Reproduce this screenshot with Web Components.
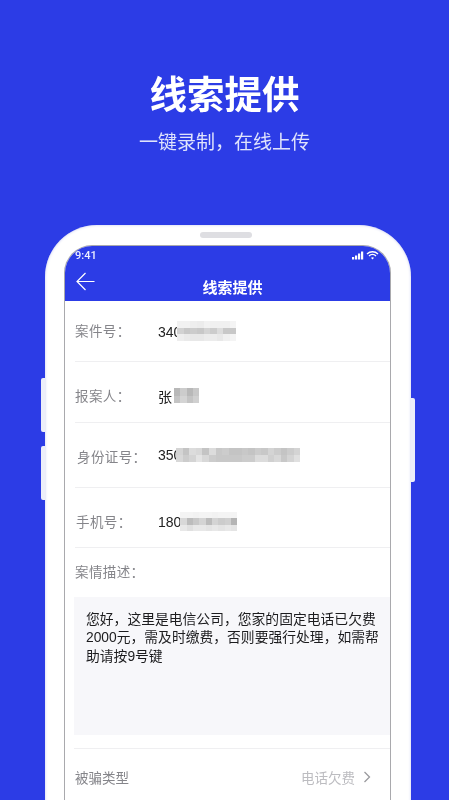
<!DOCTYPE html>
<html lang="zh">
<head>
<meta charset="utf-8">
<title>线索提供</title>
<style>
html, body { margin: 0; padding: 0; background: #2c3ce6; }
body { font-family: "Liberation Sans", "Noto Sans CJK SC", sans-serif; }
</style>
</head>
<body>
<promo-page>
  <promo-hero slot="hero" heading="线索提供" sub="一键录制，在线上传"></promo-hero>
  <phone-frame slot="phone">
    <status-bar time="9:41"></status-bar>
    <nav-bar heading="线索提供"></nav-bar>
    <form-row label="案件号：" value="340" style="--h:60px;--lb:2px;--vt:1px">
      <blur-block cols="9" cells="f2f2eeecf2f0f0f0f4 d2c8ccc8d4ccdcc8c8 eeeae8e8ecece8f0f4" w="59" h="20" style="--left:-4px"></blur-block>
    </form-row>
    <form-row label="报案人：" value="张" style="--pt:7px;--h:60px;--lb:2px">
      <blur-block cols="4" cells="b8ccb8c8 c4d4c4d0" w="25" h="15" style="--left:2px"></blur-block>
    </form-row>
    <form-row label="身份证号：" value="350" style="--h:64px;--lx:2px;--lb:-2px">
      <blur-block cols="19" cells="d4c4dcd8c4dcc8ccc4c4c8c4ccc8d4ccc4ccd4 d8ccd4e4d8ccc8c8c8c8ccccdcdcd0d8c8d4e0" w="124" h="14" style="--left:-5px"></blur-block>
    </form-row>
    <form-row label="手机号：" value="180" style="--pt:8px;--h:59px;--lx:1px;--lb:2px">
      <blur-block cols="9" cells="f4f4f2f4f4f2f4f4f4 d8bcc8d4bcd4ccd0b4 e8e0e8e8e4e8e4e8e4" w="57" h="20" style="--left:-1px"></blur-block>
    </form-row>
    <case-note label="案情描述：">您好，这里是电信公司，您家的固定电话已欠费<br>2000元，需及时缴费，否则要强行处理，如需帮<br>助请按9号键</case-note>
    <picker-row label="被骗类型" value="电话欠费"></picker-row>
  </phone-frame>
</promo-page>

<script>
"use strict";
class PromoPage extends HTMLElement {
    constructor() {
        super();
        this.attachShadow({ mode: 'open' }).innerHTML = `
        <style>
        :host { display: block; width: 449px; height: 800px; overflow: hidden; background: #2c3ce6; filter: blur(.35px); }
        .wrap { display: flex; flex-direction: column; align-items: flex-start; }
        </style>
        <div class="wrap"><slot name="hero"></slot><slot name="phone"></slot></div>`;
    }
}
class PromoHero extends HTMLElement {
    connectedCallback() {
        this.attachShadow({ mode: 'open' }).innerHTML = `
        <style>
        :host { display: flex; flex-direction: column; align-items: center; width: 449px; height: 225px; color: #fff; }
        h1 { margin: 68px 0 0; font-size: 37.5px; line-height: 54px; font-weight: 700; }
        p { margin: 8px 0 0; font-size: 19px; line-height: 26px; color: #dfe3fc; }
        </style>
        <h1>${this.getAttribute('heading')}</h1>
        <p>${this.getAttribute('sub')}</p>`;
    }
}
class PhoneFrame extends HTMLElement {
    constructor() {
        super();
        this.attachShadow({ mode: 'open' }).innerHTML = `
        <style>
        :host { display: block; position: relative; margin-left: 45px; width: 366px; height: 700px; box-sizing: border-box; padding: 20px 20px 0 19px; background: #fff; border-radius: 52px 52px 0 0; box-shadow: inset 0 0 3px #c5c9ee; }
        .pill { position: absolute; left: 155px; top: 7px; width: 52px; height: 6px; border-radius: 3px; background: #dedee2; }
        .key { position: absolute; width: 4px; background: #eceef9; }
        .k1 { left: -4px; top: 153px; height: 54px; border-radius: 2px 0 0 2px; }
        .k2 { left: -4px; top: 221px; height: 54px; border-radius: 2px 0 0 2px; }
        .k3 { right: -4px; top: 173px; height: 84px; border-radius: 0 2px 2px 0; }
        .screen { height: 680px; box-sizing: border-box; border: solid #a9a9ad; border-width: 1px 1px 0 1px; border-radius: 28px 28px 0 0; overflow: hidden; background: #fff; }
        </style>
        <i class="key k1"></i><i class="key k2"></i><i class="key k3"></i>
        <i class="pill"></i>
        <div class="screen"><slot></slot></div>`;
    }
}
class StatusBar extends HTMLElement {
    connectedCallback() {
        this.attachShadow({ mode: 'open' }).innerHTML = `
        <style>
        :host { display: flex; align-items: center; justify-content: space-between; height: 16px; padding: 1px 11px 0 10px; background: #2c3ce6; color: #eef0ff; font: 500 11px Roboto, sans-serif; }
        svg { display: block; }
        </style>
        <span>${this.getAttribute('time')}</span>
        <svg width="27" height="9" viewBox="0 0 27 9" fill="#fff">
          <rect x="0" y="6" width="2.2" height="2.5"/><rect x="3" y="4.5" width="2.2" height="4"/><rect x="6" y="2.5" width="2.2" height="6"/><rect x="9" y="0.5" width="2.2" height="8"/>
          <path d="M15 3 A8 8 0 0 1 26 3" fill="none" stroke="#fff" stroke-width="1.4"/>
          <path d="M17 5 A5 5 0 0 1 24 5" fill="none" stroke="#fff" stroke-width="1.4"/>
          <path d="M19 6.8 L20.5 8.6 L22 6.8 A2.6 2.6 0 0 0 19 6.8Z"/>
        </svg>`;
    }
}
class NavBar extends HTMLElement {
    connectedCallback() {
        this.attachShadow({ mode: 'open' }).innerHTML = `
        <style>
        :host { display: block; position: relative; height: 38px; background: #2c3ce6; color: #fff; }
        svg { position: absolute; left: 11px; top: 9px; }
        h2 { margin: 0; padding: 14px 0 0 10px; text-align: center; font-size: 15px; line-height: 22px; font-weight: 700; }
        </style>
        <svg width="19" height="19" viewBox="0 0 19 19" fill="none" stroke="#fff" stroke-width="1.2"><path d="M18.5 9.5H1M9.5 1L1 9.5L9.5 18"/></svg>
        <h2>${this.getAttribute('heading')}</h2>`;
    }
}
class FormRow extends HTMLElement {
    connectedCallback() {
        this.attachShadow({ mode: 'open' }).innerHTML = `
        <style>
        :host { display: block; margin-left: 10px; border-bottom: 1px solid #efeff1; }
        .in { display: flex; align-items: center; box-sizing: border-box; height: var(--h, 60px); padding: var(--pt, 0) 0 0 var(--lx, 0); font-size: 13.5px; }
        .l { width: calc(83px - var(--lx, 0px)); flex: none; margin-bottom: var(--lb, 0); color: #85858a; letter-spacing: .4px; }
        .v { margin-top: var(--vt, 0); color: #222; font-size: 14px; }
        </style>
        <div class="in"><span class="l">${this.getAttribute('label')}</span><span class="v">${this.getAttribute('value')}</span><slot></slot></div>`;
    }
}
class BlurBlock extends HTMLElement {
    // cells: hex grey pairs, one group per row
    connectedCallback() {
        const cols = +this.getAttribute('cols');
        const rows = this.getAttribute('cells').split(' ');
        let html = '';
        for (const r of rows) {
            for (let i = 0; i < r.length; i += 2) {
                const g = r.substr(i, 2);
                html += `<i style="background:#${g}${g}${g}"></i>`;
            }
        }
        this.attachShadow({ mode: 'open' }).innerHTML = `
        <style>
        :host { display: grid; flex: none; margin-left: var(--left, 0); width: ${this.getAttribute('w')}px; height: ${this.getAttribute('h')}px; grid-template-columns: repeat(${cols}, 1fr); grid-auto-rows: 1fr; filter: blur(.6px); }
        </style>${html}`;
    }
}
class CaseNote extends HTMLElement {
    connectedCallback() {
        const label = this.getAttribute('label');
        this.attachShadow({ mode: 'open' }).innerHTML = `
        <style>
        :host { display: block; margin-left: 9px; border-bottom: 1px solid #efeff1; padding-bottom: 13px; }
        .l { display: block; padding-left: 1px; height: 49px; line-height: 50px; font-size: 13.5px; color: #85858a; letter-spacing: .4px; }
        .box { height: 138px; box-sizing: border-box; padding: 13.5px 0 0 12px; background: #f7f7fa; font-size: 13.8px; line-height: 18.5px; color: #1c1c1e; white-space: nowrap; }
        </style>
        <span class="l">${label}</span>
        <div class="box"><slot></slot></div>`;
    }
}
class PickerRow extends HTMLElement {
    connectedCallback() {
        this.attachShadow({ mode: 'open' }).innerHTML = `
        <style>
        :host { display: flex; align-items: center; justify-content: space-between; height: 56px; padding: 0 19px 0 10px; font-size: 13.5px; }
        .l { color: #85858a; }
        .r { display: flex; align-items: center; gap: 8px; color: #bcbcc0; }
        svg { display: block; }
        </style>
        <span class="l">${this.getAttribute('label')}</span>
        <span class="r">${this.getAttribute('value')}<svg width="8" height="12" viewBox="0 0 8 12" fill="none" stroke="#9a9a9e" stroke-width="1.3"><path d="M1.5 1L6.5 6L1.5 11"/></svg></span>`;
    }
}
customElements.define('promo-page', PromoPage);
customElements.define('promo-hero', PromoHero);
customElements.define('phone-frame', PhoneFrame);
customElements.define('status-bar', StatusBar);
customElements.define('nav-bar', NavBar);
customElements.define('form-row', FormRow);
customElements.define('blur-block', BlurBlock);
customElements.define('case-note', CaseNote);
customElements.define('picker-row', PickerRow);
</script>
</body>
</html>
